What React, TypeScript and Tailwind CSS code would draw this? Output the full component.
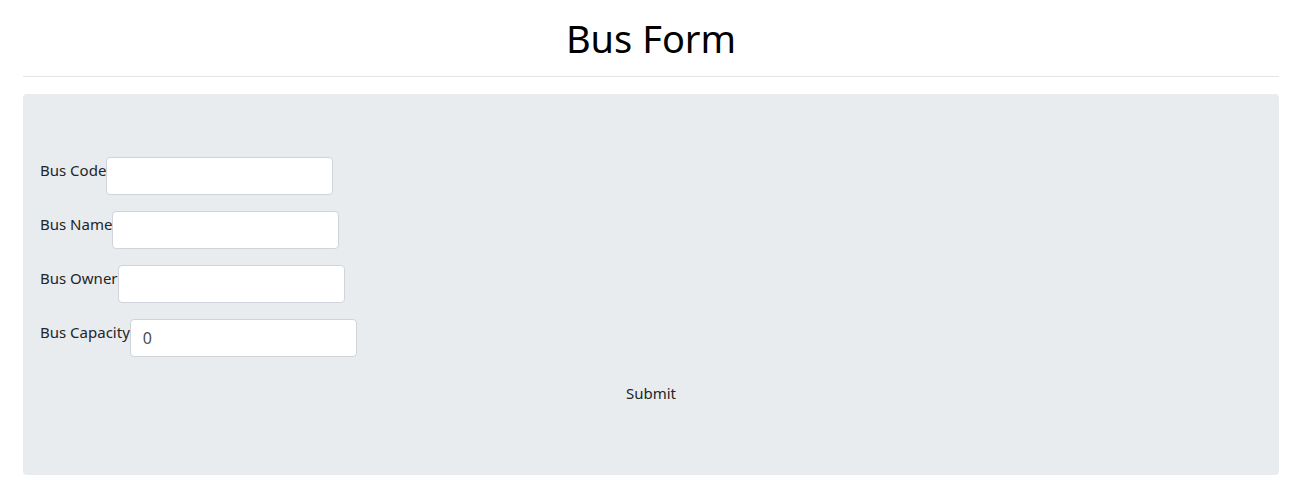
const fields = [
  { label: 'Bus Code', value: '' },
  { label: 'Bus Name', value: '' },
  { label: 'Bus Owner', value: '' },
  { label: 'Bus Capacity', value: '0' },
];

export default function App() {
  return (
    <div className="min-h-[492px] bg-white text-[#212529] font-['Noto_Sans',_'Liberation_Sans',_sans-serif]">
      <div className="mx-[23px] w-[1256px]">
        <h1 className="pt-[16px] pb-[1px] text-center text-[38px] leading-[45px] font-normal text-black">Bus Form</h1>
        <hr className="mt-[14px] border-t border-[#e5e5e5]" />
        <div className="mt-[17px] rounded-[4px] bg-[#e9ecef] px-[17px] pt-[63px] pb-[64px]">
          <form onSubmit={(e) => e.preventDefault()}>
            {fields.map((f) => (
              <div key={f.label} className="mb-[16px] flex items-start">
                <label className="pt-[1px] text-[15px] leading-[24px]">{f.label}</label>
                <input
                  type="text"
                  defaultValue={f.value}
                  className="h-[38px] w-[227px] rounded-[4px] border border-[#ced4da] bg-white px-[12px] text-[16px] text-[#495057] outline-none"
                />
              </div>
            ))}
            <div className="flex justify-center">
              <button type="submit" className="h-[38px] px-[12px] pt-[1px] text-[15px] leading-[24px] text-[#212529]">
                Submit
              </button>
            </div>
          </form>
        </div>
      </div>
    </div>
  );
}
